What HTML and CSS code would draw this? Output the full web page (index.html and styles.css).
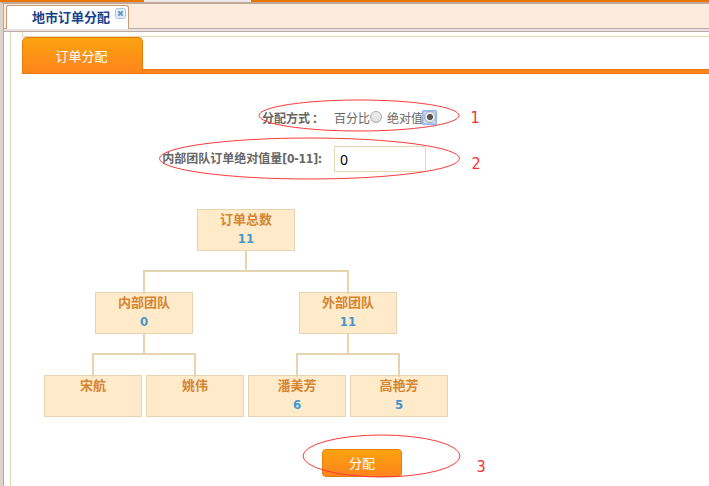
FILE: index.html
```html
<!DOCTYPE html>
<html lang="zh-CN">
<head>
<meta charset="utf-8">
<title>地市订单分配</title>
<link rel="stylesheet" href="styles.css">
</head>
<body>
<div class="topbar"><span class="topbar-gap"></span></div>
<div class="frame">
  <div class="tabbar">
    <div class="tab">
      <span class="tab-title">地市订单分配</span>
      <svg class="close" width="11" height="11" viewBox="0 0 11 11"><rect x=".5" y=".5" width="10" height="10" rx="2" fill="#e4effc" stroke="#a6c3e8"/><path d="M3.3 3.3l4.4 4.4M7.7 3.3l-4.4 4.4" stroke="#6f94bf" stroke-width="2"/></svg>
    </div>
  </div>
  <div class="strip"></div>
  <div class="content">
    <div class="panel">
      <div class="panel-top"></div>
      <div class="section-bar"><div class="section-tab">订单分配</div><div class="section-line"></div></div>
      <div class="row mode">
        <span class="label">分配方式<span class="colon">：</span></span>
        <div class="choices"><span>百分比</span><i class="radio"></i><span class="second">绝对值</span><span class="focus"><i class="radio checked"></i></span></div>
      </div>
      <div class="row amount">
        <span class="label">内部团队订单绝对值量<b class="range">[0-11]:</b></span>
        <input class="value" type="text" value="0">
      </div>
      <div class="tree">
        <div class="branch">
          <div class="node"><span>订单总数</span><b>11</b></div>
          <div class="children">
            <div class="branch">
              <div class="node"><span>内部团队</span><b>0</b></div>
              <div class="children">
                <div class="branch"><div class="node"><span>宋航</span></div></div>
                <div class="branch"><div class="node"><span>姚伟</span></div></div>
              </div>
            </div>
            <div class="branch">
              <div class="node"><span>外部团队</span><b>11</b></div>
              <div class="children">
                <div class="branch"><div class="node"><span>潘美芳</span><b>6</b></div></div>
                <div class="branch"><div class="node"><span>高艳芳</span><b>5</b></div></div>
              </div>
            </div>
          </div>
        </div>
      </div>
      <button class="submit">分配</button>
    </div>
  </div>
</div>
<svg class="notes" width="709" height="486" viewBox="0 0 709 486">
  <g fill="none" stroke="#f93a3a" stroke-width="1">
    <ellipse cx="359" cy="115.500" rx="100" ry="15.500"/>
    <ellipse cx="309.500" cy="158.500" rx="150" ry="20.500"/>
    <ellipse cx="381.500" cy="456" rx="78.500" ry="21"/>
  </g>
  <g class="note-text"><text x="470.500" y="123">1</text><text x="471.500" y="169">2</text><text x="476.500" y="472">3</text></g>
</svg>
</body>
</html>
```
FILE: styles.css
```css
* { box-sizing: border-box; }
body {
  margin: 0;
  width: 709px;
  height: 486px;
  overflow: hidden;
  background: #fff;
  font: 12px/18px "Noto Sans", "Noto Sans CJK SC", sans-serif;
  color: #666;
}
.topbar { height: 2px; padding-left: 144px; background: #ea7500; }
.topbar-gap { display: block; width: 107px; height: 2px; background: #eeeaec; }
.frame {
  height: 484px;
  border-top: 2px solid #c0a898;
  border-left: 3px solid #ddd3cb;
}
.tabbar {
  height: 25px;
  padding: 1px 0 0 2px;
  background: #fdebdd;
  border-left: 1px solid #bfa79a;
  border-bottom: 1px solid #bfa9a4;
}
.tab {
  display: flex;
  justify-content: space-between;
  width: 123px;
  height: 24px;
  padding: 2px 2px 0 25px;
  background: #fff;
  border: 1px solid #cc9972;
  border-bottom: 0;
  border-radius: 3px 3px 0 0;
}
.tab-title { font-size: 13px; line-height: 19px; font-weight: bold; color: #15428b; white-space: nowrap; }
.close { display: block; flex: none; }
.strip { height: 3px; background: #e8e1e5; border-left: 1px solid #bfa79a; border-bottom: 1px solid #bfa9a4; }
.content { height: 454px; padding-left: 6px; border-left: 1px solid #bfa79a; }
.panel { height: 454px; padding-left: 11px; border-left: 1px solid #e8d7b5; }
.panel-top { height: 5px; border-left: 1px solid #e8d7b5; border-bottom: 1px solid #e8d7b5; }
.section-bar { display: flex; align-items: flex-end; height: 37px; }
.section-tab {
  width: 121px;
  height: 37px;
  padding-right: 2px;
  border: 1px solid #e87a08;
  border-bottom: 1px solid #ea7a10;
  border-radius: 5px 5px 0 0;
  background: linear-gradient(#faa30f, #ff841c);
  color: #fff;
  font-size: 13px;
  line-height: 37px;
  text-align: center;
}
.section-line { flex: 1; height: 5px; background: #ff861c; border: solid #ea7a10; border-width: 1px 0; }
.row { display: flex; align-items: center; }
.label { width: 300px; margin-right: 12px; text-align: right; font-weight: bold; white-space: nowrap; }
.range { font-family: "DejaVu Sans Condensed", "DejaVu Sans", sans-serif; font-stretch: condensed; letter-spacing: -.2px; }
.colon { display: inline-block; width: 12px; padding-left: 2px; }
.mode { height: 18px; margin-top: 36px; }
.choices { display: flex; align-items: center; }
.second { margin-left: 5px; }
.radio {
  display: block;
  width: 12px;
  height: 12px;
  margin-top: -4px;
  border: 1px solid #a9a9a9;
  border-radius: 50%;
  background: linear-gradient(#eee, #dcdcdc);
}
.focus {
  width: 15px;
  height: 15px;
  margin: -4px 0 0 -1px;
  padding: 0 0 0 .5px;
  border: 1px solid #8fb5f5;
  border-radius: 1px;
  background: #d0e0fa;
  box-shadow: inset 0 0 0 1px #a9c7fa;
}
.checked { margin: 0; background: radial-gradient(circle, #555 0 2.700px, #e9e9e9 3.300px); }
.amount { height: 26px; margin-top: 18px; }
.value {
  width: 92px;
  height: 26px;
  padding: 0 5px;
  border: 1px solid #e8d7b5;
  outline: 0;
  background: #fff;
  color: #000;
  font: 14px "Noto Sans", sans-serif;
}
.tree { width: 408px; margin: 37px 0 0 20px; }
.branch { display: flex; flex: 1; flex-direction: column; align-items: center; position: relative; }
.node {
  width: 98px;
  height: 42px;
  border: 1px solid #e6d3b0;
  background: #ffebca;
  text-align: center;
  font-size: 13px;
  font-weight: bold;
  line-height: 19px;
  color: #d58531;
}
.node span, .node b { display: block; }
.node b { color: #4296d0; font-family: "DejaVu Sans Condensed", "DejaVu Sans", sans-serif; font-stretch: condensed; font-size: 13px; line-height: 20px; }
.children { display: flex; width: 100%; }
.children::before { content: ""; position: absolute; top: 42px; left: calc(50% - 1px); width: 2px; height: 19px; background: #e6d3b0; }
.children > .branch { padding-top: 41px; }
.children > .branch::before { content: ""; position: absolute; top: 19px; height: 22px; }
.children > .branch:first-child::before { left: calc(50% - 1px); right: 0; border: solid #e6d3b0; border-width: 2px 0 0 2px; }
.children > .branch:last-child::before { left: 0; right: calc(50% - 1px); border: solid #e6d3b0; border-width: 2px 2px 0 0; }
.children .children::before { top: 83px; }
.submit {
  display: block;
  width: 80px;
  height: 28px;
  margin: 32px 0 0 300px;
  padding: 0;
  border: 1px solid #e87a08;
  border-radius: 4px;
  background: linear-gradient(#faa30f, #ff841c);
  color: #fff;
  font: 13px/26px "Noto Sans CJK SC", sans-serif;
}
.notes { position: absolute; top: 0; left: 0; pointer-events: none; }
.note-text { font: 16px "DejaVu Sans Condensed", "DejaVu Sans", sans-serif; font-stretch: condensed; fill: #fb2f2f; }
```
